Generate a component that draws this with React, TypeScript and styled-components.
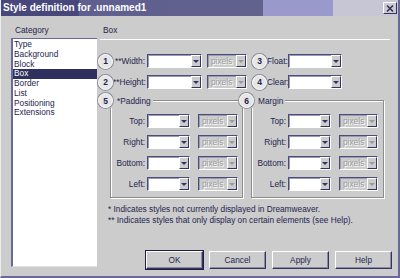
import React from 'react';
import styled, { createGlobalStyle } from 'styled-components';

const face = '#cccccc';
const ink = '#24244e';
const navy = '#333366';
const frame = '#6a6a9a';

const GlobalStyle = createGlobalStyle`
  html, body {
    margin: 0;
    padding: 0;
    background: ${face};
  }
  body {
    font-family: "Liberation Sans", Arial, sans-serif;
  }
  * {
    box-sizing: border-box;
  }
`;

const Window = styled.div`
  width: 400px;
  height: 278px;
  display: flex;
  flex-direction: column;
  background: ${face};
  border-left: 1px solid #ececec;
  border-right: 2px solid ${frame};
  border-bottom: 2px solid ${frame};
  color: ${ink};
  font-size: 8.3px;
  overflow: hidden;
`;

const TitleBar = styled.div`
  flex: none;
  height: 16px;
  display: flex;
  align-items: center;
  justify-content: space-between;
  padding: 0 1px 0 2px;
  background: linear-gradient(
    to right,
    #47477b 0,
    #47477b 78px,
    #5f5f90 78px,
    #62628f 262px,
    #9999cc 262px,
    #9999cc 332px,
    #c6c6d4 332px
  );
`;

const Title = styled.span`
  color: #ffffff;
  font-size: 10px;
  font-weight: bold;
  line-height: 16px;
  white-space: nowrap;
`;

const CloseButton = styled.div`
  width: 14px;
  height: 12px;
  display: flex;
  align-items: center;
  justify-content: center;
  background: ${face};
  border: 1px solid;
  border-color: #ffffff ${navy} ${navy} #ffffff;
`;

const Main = styled.div`
  flex: 1;
  display: flex;
  padding: 9px 0 0 10px;
`;

const CategoryColumn = styled.div`
  width: 86px;
  display: flex;
  flex-direction: column;
`;

const Heading = styled.div<{ $indent: number }>`
  height: 10px;
  line-height: 10px;
  padding-left: ${(p) => p.$indent}px;
`;

const CategoryList = styled.ul`
  list-style: none;
  margin: 3px 0 0;
  padding: 1px 0 0;
  height: 229px;
  background: #ffffff;
  border-top: 1px solid ${frame};
  border-left: 2px solid ${frame};
  border-bottom: 1px solid #e2e2e2;
`;

const CategoryItem = styled.li<{ $selected?: boolean }>`
  height: 9.75px;
  line-height: 9.75px;
  padding-left: 1px;
  background: ${(p) => (p.$selected ? '#30305f' : 'transparent')};
  color: ${(p) => (p.$selected ? '#ffffff' : ink)};
`;

const PanelColumn = styled.div`
  width: 295px;
  display: flex;
  flex-direction: column;
`;

const Separator = styled.div`
  height: 1px;
  margin: 4px 2px 0 3px;
  background: #ffffff;
`;

const FieldRow = styled.div<{ $top: number }>`
  height: 14px;
  margin-top: ${(p) => p.$top}px;
  display: flex;
  align-items: center;
`;

const Badge = styled.span<{ $gap?: number }>`
  flex: none;
  width: 15px;
  height: 15px;
  margin-left: ${(p) => p.$gap ?? 0}px;
  display: flex;
  align-items: center;
  justify-content: center;
  border-radius: 50%;
  background: #e6e6e6;
  border: 1.5px solid #ffffff;
  box-shadow: 0 0 0 1px #8e8e9c;
  color: ${ink};
  font-size: 8.5px;
  font-weight: bold;
  position: relative;
  z-index: 1;
`;

const Label = styled.span<{ $w: number }>`
  flex: none;
  width: ${(p) => p.$w}px;
  padding-right: 2px;
  text-align: right;
  white-space: nowrap;
  line-height: 10px;
`;

const Combo = styled.div<{ $w: number; $gap?: number; $disabled?: boolean }>`
  flex: none;
  width: ${(p) => p.$w}px;
  height: 14px;
  margin-left: ${(p) => p.$gap ?? 0}px;
  display: flex;
  background: ${(p) => (p.$disabled ? face : '#ffffff')};
  border: 1px solid;
  border-color: #4c4c7c #ffffff #ffffff #4c4c7c;
  box-shadow: inset 1px 1px 0 #9a9ab0;
`;

const ComboText = styled.span`
  flex: 1;
  padding-left: 3px;
  line-height: 12px;
  color: #9c9c9c;
  text-shadow: 1px 1px 0 #ffffff;
  overflow: hidden;
`;

const ArrowButton = styled.span<{ $disabled?: boolean }>`
  flex: none;
  width: 10px;
  height: 12px;
  margin-left: auto;
  display: flex;
  align-items: center;
  justify-content: center;
  background: ${face};
  border: 1px solid;
  border-color: #ffffff ${navy} ${navy} #ffffff;

  &::after {
    content: '';
    border-left: 3px solid transparent;
    border-right: 3px solid transparent;
    border-top: 3px solid ${(p) => (p.$disabled ? '#9a9a9a' : navy)};
    margin-top: 1px;
  }
`;

const Groups = styled.div`
  display: flex;
  gap: 8px;
  margin: 4px 0 0 13px;
`;

const Group = styled.fieldset`
  width: 133px;
  margin: 0;
  padding: 6px 0 6px 0;
  border: 1px solid #8c8c8c;
  box-shadow: inset 1px 1px 0 #ffffff, 1px 1px 0 #ffffff;
  display: flex;
  flex-direction: column;
  gap: 7px;
  min-width: 0;
`;

const Legend = styled.legend`
  margin-left: -13px;
  padding: 0 2px 0 0;
  height: 15px;
  display: flex;
  align-items: center;
  gap: 4px;
  background: ${face};
  line-height: 10px;
`;

const GroupRow = styled.div`
  height: 14px;
  display: flex;
  align-items: center;
`;

const Notes = styled.div`
  margin-top: 6px;
  padding-left: 11px;
  line-height: 11px;
  white-space: nowrap;
`;

const ButtonBar = styled.div`
  margin-top: 25px;
  display: flex;
  justify-content: flex-end;
  gap: 6px;
`;

const Button = styled.button<{ $default?: boolean }>`
  width: 57px;
  height: 18px;
  padding: 0;
  font: inherit;
  color: ${ink};
  background: ${face};
  border: 1px solid;
  border-color: #ffffff ${navy} ${navy} #ffffff;
  box-shadow: ${(p) =>
    p.$default ? `0 0 0 1px #1e1e40, inset -1px -1px 0 #8a8aa0` : `inset -1px -1px 0 #8a8aa0`};
`;

const categories = ['Type', 'Background', 'Block', 'Box', 'Border', 'List', 'Positioning', 'Extensions'];
const sides = ['Top:', 'Right:', 'Bottom:', 'Left:'];

const UnitsBox: React.FC<{ gap: number; w?: number }> = ({ gap, w = 40 }) => (
  <Combo $w={w} $gap={gap} $disabled>
    <ComboText>pixels</ComboText>
    <ArrowButton $disabled />
  </Combo>
);

const ValueBox: React.FC<{ w: number }> = ({ w }) => (
  <Combo $w={w}>
    <ArrowButton />
  </Combo>
);

const SideGroup: React.FC<{ num: string; title: string; unitsW: number }> = ({ num, title, unitsW }) => (
  <Group>
    <Legend>
      <Badge>{num}</Badge>
      <span>{title}</span>
    </Legend>
    {sides.map((side) => (
      <GroupRow key={side}>
        <Label $w={36}>{side}</Label>
        <ValueBox w={43} />
        <UnitsBox gap={8} w={unitsW} />
      </GroupRow>
    ))}
  </Group>
);

export default function App() {
  return (
    <>
      <GlobalStyle />
      <Window>
        <TitleBar>
          <Title>Style definition for .unnamed1</Title>
          <CloseButton>
            <svg width="8" height="7" viewBox="0 0 8 7">
              <path d="M1 0.5 L7 6.5 M7 0.5 L1 6.5" stroke={navy} strokeWidth="1.6" />
            </svg>
          </CloseButton>
        </TitleBar>
        <Main>
          <CategoryColumn>
            <Heading $indent={4}>Category</Heading>
            <CategoryList>
              {categories.map((c) => (
                <CategoryItem key={c} $selected={c === 'Box'}>
                  {c}
                </CategoryItem>
              ))}
            </CategoryList>
          </CategoryColumn>
          <PanelColumn>
            <Heading $indent={6}>Box</Heading>
            <Separator />
            <FieldRow $top={14}>
              <Badge $gap={1}>1</Badge>
              <Label $w={34}>**Width:</Label>
              <ValueBox w={55} />
              <UnitsBox gap={5} />
              <Badge $gap={5}>3</Badge>
              <Label $w={21}>Float:</Label>
              <ValueBox w={54} />
            </FieldRow>
            <FieldRow $top={7}>
              <Badge $gap={1}>2</Badge>
              <Label $w={34}>**Height:</Label>
              <ValueBox w={55} />
              <UnitsBox gap={5} />
              <Badge $gap={5}>4</Badge>
              <Label $w={21}>Clear:</Label>
              <ValueBox w={54} />
            </FieldRow>
            <Groups>
              <SideGroup num="5" title="*Padding" unitsW={40} />
              <SideGroup num="6" title="Margin" unitsW={39} />
            </Groups>
            <Notes>
              <div>* Indicates styles not currently displayed in Dreamweaver.</div>
              <div>** Indicates styles that only display on certain elements (see Help).</div>
            </Notes>
            <ButtonBar>
              <Button $default>OK</Button>
              <Button>Cancel</Button>
              <Button>Apply</Button>
              <Button>Help</Button>
            </ButtonBar>
          </PanelColumn>
        </Main>
      </Window>
    </>
  );
}
